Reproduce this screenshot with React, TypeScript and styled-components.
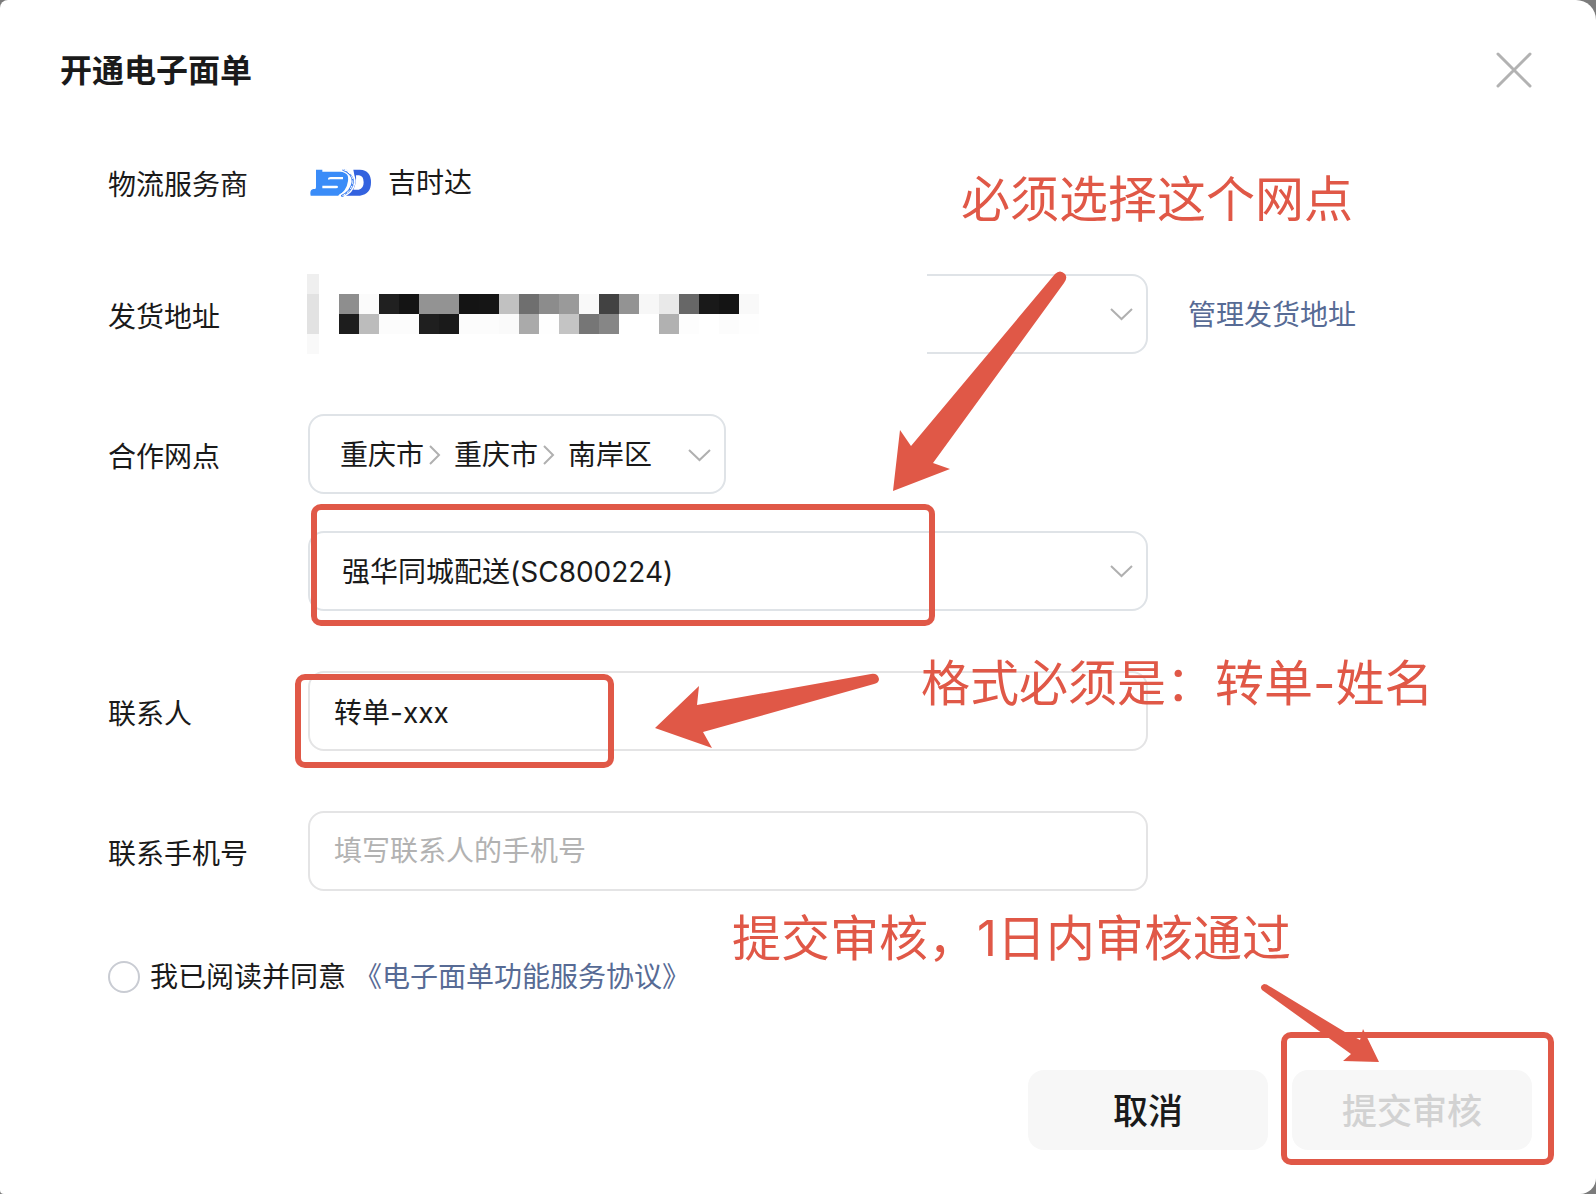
import React, { useState } from 'react';
import styled, { createGlobalStyle } from 'styled-components';

const ink = '#1a1a1a';
const link = '#576b95';
const mark = '#e05847';
const line = '#e4e4e5';

const GlobalStyle = createGlobalStyle`
  *, *::before, *::after { box-sizing: border-box; }
  body {
    margin: 0;
    background: #7b7b7b;
    color: ${ink};
    font-family: Inter, "Noto Sans CJK SC", sans-serif;
    font-size: 28px;
    line-height: 40px;
  }
  button, input, select { font: inherit; color: inherit; }
`;

const Dialog = styled.main`
  position: relative;
  display: flex;
  flex-direction: column;
  min-height: 100vh;
  overflow: hidden;
  background: #fff;
  border-radius: 8px 20px 16px 4px;
`;

const Header = styled.header`
  display: flex;
  align-items: center;
  justify-content: space-between;
  padding: 48px 64px 0 60px;
`;

const Title = styled.h1`
  margin: 0;
  padding-top: 2px;
  font-size: 32px;
  line-height: 42px;
  font-weight: 700;
`;

const CloseButton = styled.button`
  display: flex;
  padding: 0;
  border: 0;
  background: none;
  cursor: pointer;
`;

const Form = styled.form`
  display: flex;
  flex: 1;
  flex-direction: column;
  padding: 50px 64px 44px 108px;
`;

const Row = styled.div<{ $gap?: number }>`
  display: grid;
  grid-template-columns: 200px minmax(0, 1fr);
  margin-bottom: ${(p) => p.$gap ?? 60}px;
`;

const labelText = `
  padding-top: 23px;
  white-space: nowrap;
`;

const Label = styled.label`
  ${labelText}
`;

const LabelText = styled.span`
  ${labelText}
`;

const Content = styled.div`
  display: flex;
  align-items: center;
  gap: 40px;
  min-height: 80px;
`;

const Provider = styled.div`
  display: flex;
  align-items: center;
  gap: 16px;
  padding: 2px 0 0 2px;
`;

const Stack = styled.div`
  display: flex;
  flex-direction: column;
  align-items: flex-start;
  gap: 37px;
`;

const Field = styled.div<{ $tint?: boolean }>`
  position: relative;
  display: flex;
  align-items: center;
  width: 100%;
  max-width: 840px;
  height: 80px;
  border: 2px solid ${(p) => (p.$tint ? '#dfe3e7' : line)};
  border-radius: 16px;
`;

const RegionField = styled(Field)`
  width: auto;
  padding: 2px 13px 0 30px;
`;

const Select = styled.select`
  width: 100%;
  height: 76px;
  padding: 2px 48px 0 32px;
  border: 0;
  border-radius: 14px;
  outline: 0;
  background: none;
  appearance: none;
`;

const RegionSelect = styled.select`
  width: 84px;
  height: 40px;
  padding: 0;
  border: 0;
  outline: 0;
  background: none;
  appearance: none;
`;

const Input = styled.input`
  width: 100%;
  height: 76px;
  padding: 0 24px;
  border: 0;
  border-radius: 14px;
  outline: 0;
  background: none;
  &::placeholder { color: #b2b2b2; opacity: 1; }
`;

const FieldArrow = styled.svg`
  position: absolute;
  right: 13px;
  pointer-events: none;
`;

const Separator = styled.svg`
  flex: none;
  margin: 0 13px 0 5px;
`;

const RegionArrow = styled.svg`
  flex: none;
  margin-left: 36px;
`;

const Link = styled.a`
  flex: none;
  padding-top: 2px;
  color: ${link};
  text-decoration: none;
`;

const Mask = styled.div`
  position: absolute;
  top: -2px;
  left: -3px;
  display: flex;
  align-items: center;
  width: 620px;
  height: 80px;
  background: #fff;
`;

const MaskEdge = styled.div`
  width: 12px;
  height: 80px;
  margin-right: 20px;
  background: linear-gradient(#efefef 20px, #e2e2e2 20px 60px, #f9f9f9 60px);
`;

const Mosaic = styled.div`
  display: grid;
  grid-template-columns: repeat(21, 20px);
  grid-auto-rows: 20px;
`;

const Tile = styled.i<{ $shade: string }>`
  background: #${(p) => p.$shade.repeat(3)};
`;

const Agreement = styled.div`
  display: flex;
  align-items: center;
  margin-top: 4px;
`;

const AgreeLabel = styled.label`
  display: flex;
  align-items: center;
  gap: 10px;
  margin-right: 8px;
  padding-top: 2px;
`;

const Radio = styled.input`
  width: 32px;
  height: 32px;
  margin: 0;
  border: 2px solid #c9ccd3;
  border-radius: 50%;
  appearance: none;
  &:checked { border: 10px solid #07c160; }
`;

const Actions = styled.footer`
  display: flex;
  justify-content: flex-end;
  gap: 24px;
  margin-top: auto;
`;

const Button = styled.button`
  width: 240px;
  height: 80px;
  padding: 2px 0 0;
  border: 0;
  border-radius: 16px;
  background: #f7f7f7;
  font-size: 35px;
  font-weight: 500;
  cursor: pointer;
  &:disabled { color: #d2d2d2; cursor: default; }
`;

const Anchor = styled.div`
  position: relative;
`;

const Highlight = styled.div<{ $x: number; $y: number; $w: number; $h: number }>`
  position: absolute;
  left: ${(p) => p.$x}px;
  top: ${(p) => p.$y}px;
  width: ${(p) => p.$w}px;
  height: ${(p) => p.$h}px;
  border: 6px solid ${mark};
  border-radius: 10px;
  pointer-events: none;
`;

const Note = styled.p<{ $x: number; $y: number }>`
  position: absolute;
  left: ${(p) => p.$x}px;
  top: ${(p) => p.$y}px;
  margin: 0;
  color: ${mark};
  font-size: 49px;
  line-height: 64px;
  font-weight: 400;
  white-space: nowrap;
  pointer-events: none;
`;

const Pointer = styled.svg<{ $x: number; $y: number }>`
  position: absolute;
  left: ${(p) => p.$x}px;
  top: ${(p) => p.$y}px;
  fill: ${mark};
  pointer-events: none;
`;

const tiles = [
  '8e fb 20 14 93 93 14 15 c1 6f 8c 9a f9 42 93 f7 e9 67 19 14 f9',
  '1d bc fc fc 1f 1a fc fc fa aa fe c4 76 86 ff ff b1 fd ff fc fe',
].flatMap((row) => row.split(' '));

const downPath = <path d="M1 1 11.500 11 22 1" fill="none" stroke="#b0b0b0" strokeWidth="2" />;

const Logo = () => (
  <svg width="62" height="28" viewBox="0 0 186 84" aria-label="JSD" role="img">
    <path d="M18 2H37V8H104Q116 14 114 36Q110 66 84 80H2Q-2 62 10 60H15Q18 60 18 54Z" fill="#3a8cf8" />
    <path d="M54 29Q54 24 62 24H99V31H60Q54 34 54 29ZM37 50H80Q84 50 84 54T78 58H37Z" fill="#fff" />
    <path d="M130 2H150Q183 4 183 40T150 80H98Q130 60 136 34Z" fill="#3362df" />
    <path d="M138 19H147Q161 21 161 40T146 62H130Q140 42 138 19Z" fill="#fff" />
    <g fill="none">
      <path d="M94 1Q130 12 126 40T90 82" stroke="#fff" strokeWidth="12" />
      <path d="M98 1Q132 14 128 41T94 82" stroke="#3a7df0" strokeWidth="7" />
      <path d="M98 1Q132 14 128 41T94 82" stroke="#fff" strokeWidth="3" strokeDasharray="11 5" />
      <path d="M104 1Q140 18 134 44T102 82" stroke="#fff" strokeWidth="4" />
    </g>
  </svg>
);

const RegionArrowRight = () => (
  <Separator width="12" height="20" viewBox="0 0 12 20" aria-hidden="true">
    <path d="M1 1 10 10 1 19" fill="none" stroke="#b0b0b0" strokeWidth="2" />
  </Separator>
);

export default function App() {
  const [contact, setContact] = useState('转单-xxx');
  const [phone, setPhone] = useState('');

  return (
    <>
      <GlobalStyle />
      <Dialog>
        <Header>
          <Title>开通电子面单</Title>
          <CloseButton type="button" aria-label="关闭">
            <svg width="36" height="36" viewBox="0 0 36 36" aria-hidden="true">
              <path d="M2 2 34 34M34 2 2 34" stroke="#b2b2b2" strokeWidth="3" strokeLinecap="round" />
            </svg>
          </CloseButton>
        </Header>

        <Form onSubmit={(e) => e.preventDefault()}>
          <Row $gap={52}>
            <LabelText>物流服务商</LabelText>
            <Content>
              <Provider>
                <Logo />
                <span>吉时达</span>
              </Provider>
            </Content>
          </Row>

          <Row>
            <Label htmlFor="address">发货地址</Label>
            <Content>
              <Field $tint>
                <Select id="address" defaultValue="">
                  <option value="" />
                </Select>
                <FieldArrow width="23" height="13" aria-hidden="true">{downPath}</FieldArrow>
                <Mask>
                  <MaskEdge />
                  <Mosaic>
                    {tiles.map((shade, i) => <Tile key={i} $shade={shade} />)}
                  </Mosaic>
                </Mask>
              </Field>
              <Link href="#address">管理发货地址</Link>
            </Content>
          </Row>

          <Row>
            <Label htmlFor="branch">合作网点</Label>
            <Stack>
              <RegionField $tint role="group" aria-label="网点地区">
                <RegionSelect aria-label="省"><option>重庆市</option></RegionSelect>
                <RegionArrowRight />
                <RegionSelect aria-label="市"><option>重庆市</option></RegionSelect>
                <RegionArrowRight />
                <RegionSelect aria-label="区"><option>南岸区</option></RegionSelect>
                <RegionArrow width="23" height="13" aria-hidden="true">{downPath}</RegionArrow>
              </RegionField>
              <Field $tint>
                <Select id="branch"><option>强华同城配送(SC800224)</option></Select>
                <FieldArrow width="23" height="13" aria-hidden="true">{downPath}</FieldArrow>
                <Highlight $x={1} $y={-29} $w={624} $h={122} />
              </Field>
            </Stack>
          </Row>

          <Row>
            <Label htmlFor="contact">联系人</Label>
            <Field>
              <Input id="contact" value={contact} onChange={(e) => setContact(e.target.value)} />
              <Highlight $x={-15} $y={1} $w={319} $h={94} />
            </Field>
          </Row>

          <Row>
            <Label htmlFor="phone">联系手机号</Label>
            <Field>
              <Input
                id="phone"
                type="tel"
                placeholder="填写联系人的手机号"
                value={phone}
                onChange={(e) => setPhone(e.target.value)}
              />
            </Field>
          </Row>

          <Agreement>
            <AgreeLabel>
              <Radio type="radio" name="agree" />
              我已阅读并同意
            </AgreeLabel>
            <Link href="#agreement">《电子面单功能服务协议》</Link>
          </Agreement>

          <Actions>
            <Button type="button">取消</Button>
            <Anchor>
              <Button type="submit" disabled>提交审核</Button>
              <Highlight $x={-11} $y={-38} $w={273} $h={133} />
              <Note $x={-560} $y={-163}>提交审核，1日内审核通过</Note>
              <Pointer $x={-32} $y={-86} width="120" height="80" viewBox="1260 984 120 80" aria-hidden="true">
                <path d="M1262 990Q1259 986 1264 984Q1267 984 1269 986L1345 1032 1360 1040 1363 1029 1379 1062 1343 1061 1351 1054Z" />
              </Pointer>
            </Anchor>
          </Actions>
        </Form>

        <Note $x={961} $y={168}>必须选择这个网点</Note>
        <Note $x={921} $y={652}>格式必须是：转单-姓名</Note>
        <Pointer $x={890} $y={270} width="178" height="222" viewBox="890 270 178 222" aria-hidden="true">
          <path d="M893 491 900 430 911 446 1055 274Q1060 269 1065 274Q1068 278 1064 283L933 463 950 469Z" />
        </Pointer>
        <Pointer $x={654} $y={672} width="228" height="78" viewBox="654 672 228 78" aria-hidden="true">
          <path d="M655 728 699 686 697 705 871 674Q878 673 879 679Q879 683 874 684L703 732 712 748Z" />
        </Pointer>
      </Dialog>
    </>
  );
}
